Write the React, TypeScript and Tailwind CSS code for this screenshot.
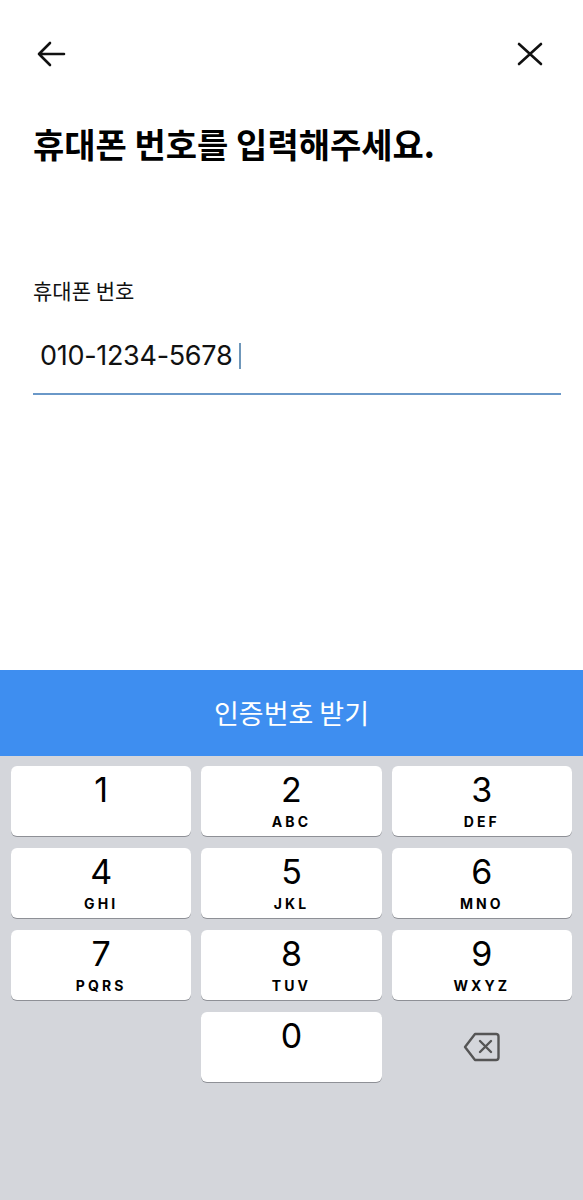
const KEYS: { n: string; l?: string }[] = [
  { n: "1" },
  { n: "2", l: "ABC" },
  { n: "3", l: "DEF" },
  { n: "4", l: "GHI" },
  { n: "5", l: "JKL" },
  { n: "6", l: "MNO" },
  { n: "7", l: "PQRS" },
  { n: "8", l: "TUV" },
  { n: "9", l: "WXYZ" },
];

const kr = "font-['Noto_Sans_CJK_KR',sans-serif]";

function Key({ n, l }: { n: string; l?: string }) {
  return (
    <div className="flex h-[70px] flex-col items-center rounded-[6px] bg-white shadow-[0_1px_0_#8e9096]">
      <span className="mt-[4px] font-['Inter',sans-serif] text-[34px] leading-[40px] font-normal text-black">
        {n}
      </span>
      {l && (
        <span className="mt-[5px] font-['Inter',sans-serif] text-[14px] leading-[14px] font-bold tracking-[0.22em] text-black">
          {l}
        </span>
      )}
    </div>
  );
}

export default function App() {
  return (
    <div className="flex min-h-[1200px] w-full flex-col bg-white">
      {/* top form */}
      <div className="flex h-[670px] flex-col">
        <div className="flex items-center justify-between pt-[39px] pr-[38px] pl-[36px]">
          <svg width="30" height="30" viewBox="0 0 30 30" fill="none" stroke="#111" strokeWidth="2.6" strokeLinecap="round" strokeLinejoin="round">
            <path d="M3 15H28M14 4L3 15L14 26" />
          </svg>
          <svg width="30" height="30" viewBox="0 0 30 30" fill="none" stroke="#111" strokeWidth="2.6" strokeLinecap="round">
            <path d="M4 5L26 25M26 5L4 25" />
          </svg>
        </div>

        <h1 className={`${kr} mt-[54px] px-[33px] text-[34px] leading-[42px] font-bold text-black`}>
          휴대폰 번호를 입력해주세요.
        </h1>

        <div className="mt-[111px] pr-[22px] pl-[33px]">
          <p className={`${kr} text-[21px] leading-[28px] text-[#111]`}>휴대폰 번호</p>
          <div className="mt-[34px] flex items-center border-b-2 border-[#6a98c8] pb-[19px] pl-[7px]">
            <span className="font-['Inter',sans-serif] text-[27px] leading-[36px] tracking-[-0.3px] text-[#111]">
              010-1234-5678
            </span>
            <span className="ml-[7px] h-[26px] w-[2px] bg-[#6f97ba]" />
          </div>
        </div>
      </div>

      {/* submit */}
      <button className={`${kr} flex h-[86px] w-full items-center justify-center bg-[#3e8ef0] text-[27px] text-white`}>
        인증번호 받기
      </button>

      {/* keypad */}
      <div className="flex-1 bg-[#d4d6db] px-[11px] pt-[10px] pb-[20px]">
        <div className="grid grid-cols-3 gap-x-[10px] gap-y-[12px]">
          {KEYS.map((k) => (
            <Key key={k.n} n={k.n} l={k.l} />
          ))}
          <div />
          <Key n="0" />
          <div className="flex h-[70px] items-center justify-center">
            <svg width="38" height="32" viewBox="0 0 38 32" fill="none" stroke="#555" strokeWidth="2.4" strokeLinejoin="round" strokeLinecap="round">
              <path d="M12 3H33a2.5 2.5 0 0 1 2.5 2.5V26.5A2.5 2.5 0 0 1 33 29H12L2 16Z" />
              <path d="M17 10L28 21M28 10L17 21" />
            </svg>
          </div>
        </div>
      </div>
    </div>
  );
}
